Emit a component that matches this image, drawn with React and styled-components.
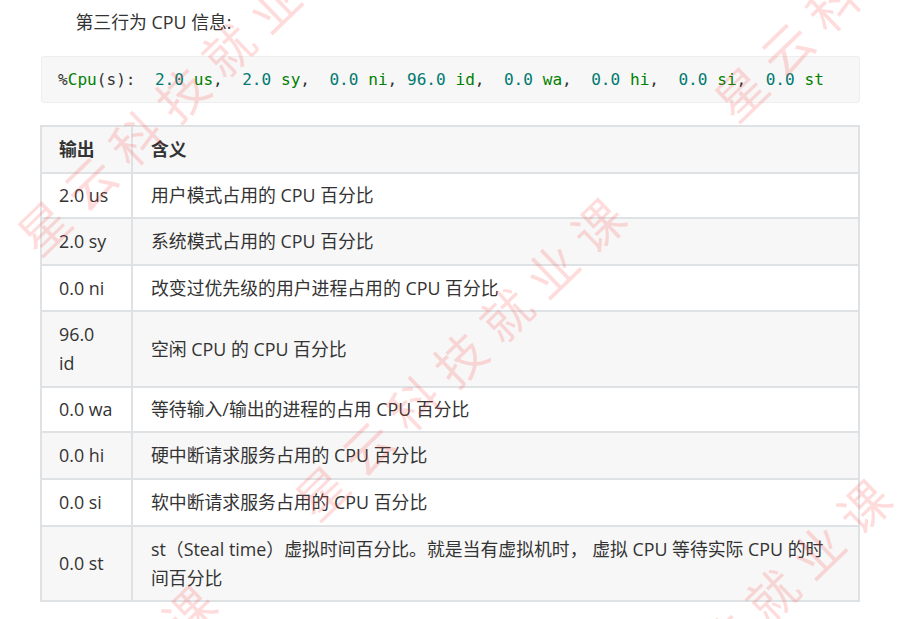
import React from "react"
import styled, { createGlobalStyle } from "styled-components"

const GlobalStyle = createGlobalStyle`
  body {
    margin: 0;
    padding: 0;
    background: #fff;
    color: #333;
    font-family: "Open Sans", "Noto Sans CJK SC", sans-serif;
  }
`

const Page = styled.div`
  position: relative;
  width: 916px;
  height: 619px;
  overflow: hidden;
  box-sizing: border-box;
  padding: 8px 56px 0 40px;
`

const Intro = styled.p`
  margin: 0;
  font-size: 17.85px;
  line-height: 29px;
  text-indent: 35.5px;
`

const CodeBlock = styled.pre`
  margin: 19px 0 22px 1px;
  height: 47px;
  box-sizing: border-box;
  padding: 0 16px;
  display: flex;
  align-items: center;
  background: #f7f7f7;
  border: 1px solid #eee;
  border-radius: 3px;
  font-family: "DejaVu Sans Mono", monospace;
  font-size: 16.1px;
  color: #333;
`

const Num = styled.span`
  color: #007a70;
`

const Label = styled.span`
  color: #008000;
`

const Table = styled.table`
  width: 820px;
  border-collapse: collapse;
  table-layout: fixed;
  font-size: 17.85px;
  line-height: 29px;
`

const Row = styled.tr`
  background: ${(p) => (p.$striped ? "#f7f7f7" : "#fff")};
`

const HeadCell = styled.th`
  height: ${(p) => p.$h}px;
  padding: 0 17px 0 ${(p) => p.$pad}px;
  box-sizing: border-box;
  border: 2px solid #dfe2e5;
  text-align: left;
  font-weight: 700;
`

const Cell = styled.td`
  height: ${(p) => p.$h}px;
  padding: 0 17px 0 ${(p) => p.$pad}px;
  box-sizing: border-box;
  border: 2px solid #dfe2e5;
`

const Watermarks = styled.div`
  position: absolute;
  inset: 0;
  pointer-events: none;
`

const Mark = styled.span`
  position: absolute;
  left: ${(p) => p.$x}px;
  top: ${(p) => p.$y}px;
  transform: translateY(-50%) rotate(-44deg);
  transform-origin: 0 50%;
  white-space: nowrap;
  font-family: "Noto Sans CJK SC", sans-serif;
  font-size: 50px;
  line-height: 60px;
  letter-spacing: 14px;
  color: rgba(255, 60, 60, 0.18);
`

const rows = [
  ["2.0 us", "用户模式占用的 CPU 百分比", 45],
  ["2.0 sy", "系统模式占用的 CPU 百分比", 47],
  ["0.0 ni", "改变过优先级的用户进程占用的 CPU 百分比", 46],
  ["96.0 id", "空闲 CPU 的 CPU 百分比", 76],
  ["0.0 wa", "等待输入/输出的进程的占用 CPU 百分比", 45],
  ["0.0 hi", "硬中断请求服务占用的 CPU 百分比", 47],
  ["0.0 si", "软中断请求服务占用的 CPU 百分比", 47],
  ["0.0 st", "st（Steal time）虚拟时间百分比。就是当有虚拟机时， 虚拟 CPU 等待实际 CPU 的时间百分比", 75],
]

const stats = [
  ["  2.0", "us", ","],
  ["  2.0", "sy", ","],
  ["  0.0", "ni", ","],
  [" 96.0", "id", ","],
  ["  0.0", "wa", ","],
  ["  0.0", "hi", ","],
  ["  0.0", "si", ","],
  ["  0.0", "st", ""],
]

const marks = [
  [24, 243],
  [302, 508],
  [721, 109],
  [568, 789],
  [-107, 895],
]

export default function App() {
  return (
    <Page>
      <GlobalStyle />
      <Intro>第三行为 CPU 信息:</Intro>
      <CodeBlock>
        <code>
          %<Label>Cpu</Label>(s):
          {stats.map(([num, label, sep]) => (
            <React.Fragment key={label}>
              <Num>{num} </Num>
              <Label>{label}</Label>
              {sep}
            </React.Fragment>
          ))}
        </code>
      </CodeBlock>
      <Table>
        <colgroup>
          <col width="91" />
          <col />
        </colgroup>
        <thead>
          <Row $striped>
            <HeadCell $h={47} $pad={17}>输出</HeadCell>
            <HeadCell $h={47} $pad={18}>含义</HeadCell>
          </Row>
        </thead>
        <tbody>
          {rows.map(([name, desc, h], i) => (
            <Row key={name} $striped={i % 2 === 1}>
              <Cell $h={h} $pad={17}>{name}</Cell>
              <Cell $h={h} $pad={18}>{desc}</Cell>
            </Row>
          ))}
        </tbody>
      </Table>
      <Watermarks>
        {marks.map(([x, y]) => (
          <Mark key={x} $x={x} $y={y}>星云科技就业课</Mark>
        ))}
      </Watermarks>
    </Page>
  )
}
